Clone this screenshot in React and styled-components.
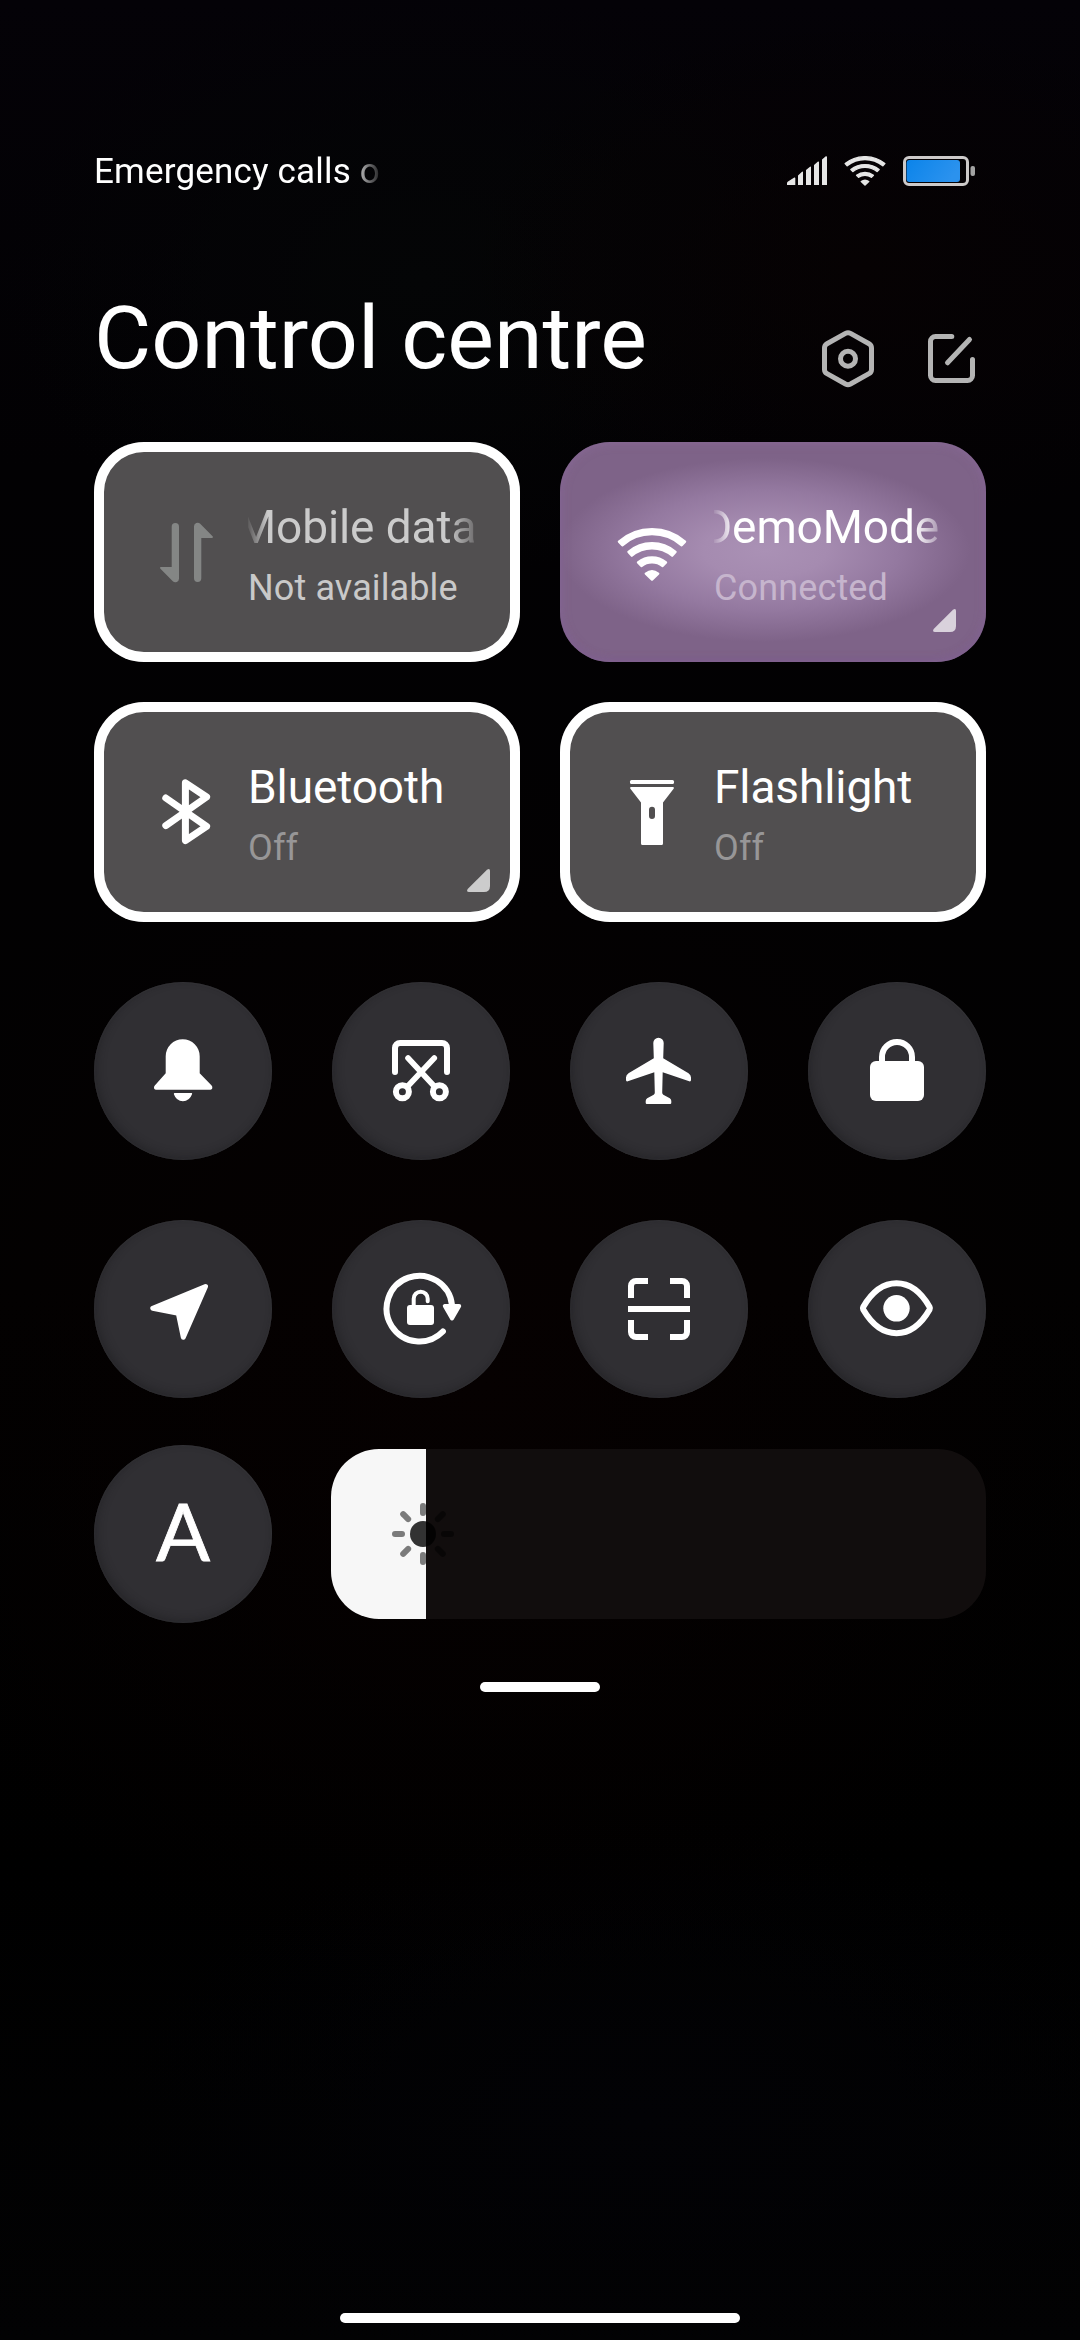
import React from "react";
import styled, { createGlobalStyle } from "styled-components";

const GlobalStyle = createGlobalStyle`
  * { box-sizing: border-box; }
  html, body { margin: 0; padding: 0; background: #020103; }
  body { font-family: Roboto, "Noto Sans", sans-serif; color: #fff; }
  svg { display: block; flex: none; }
`;

const Screen = styled.main`
  width: 1080px;
  height: 2340px;
  overflow: hidden;
  display: flex;
  flex-direction: column;
  padding: 151px 94px 17px;
  background:
    radial-gradient(420px 260px at 860px 270px, #060203, transparent),
    radial-gradient(420px 300px at 420px 280px, #040506, transparent),
    radial-gradient(620px 620px at 480px 1380px, #060101, transparent),
    radial-gradient(520px 300px at 640px 2120px, #020205, transparent),
    linear-gradient(#040207, #020103 20%, #020101 55%, #000 80%, #020203);
`;

const StatusBar = styled.div`
  display: flex;
  justify-content: space-between;
  align-items: flex-start;
  height: 42px;
  padding-right: 11px;
`;

const Carrier = styled.span`
  width: 292px;
  font-size: 35px;
  line-height: 42px;
  letter-spacing: 0.18px;
  white-space: nowrap;
  mask-image: linear-gradient(to right, #000 256px, transparent 290px);
`;

const StatusIcons = styled.div`
  display: flex;
  gap: 17px;
  padding-top: 5px;
`;

const Header = styled.header`
  display: flex;
  justify-content: space-between;
  align-items: flex-start;
  height: 156px;
  margin-top: 93px;
  padding-right: 8px;
`;

const Title = styled.h1`
  margin: 0;
  font-size: 88px;
  font-weight: 400;
  line-height: 104px;
  white-space: nowrap;
`;

const HeaderActions = styled.div`
  display: flex;
  gap: 43px;
  padding-top: 42px;
`;

const PlainButton = styled.button`
  padding: 0;
  border: 0;
  background: none;
  color: #b4b4b4;
`;

const TileGrid = styled.section`
  display: grid;
  grid-template-columns: 426px 426px;
  gap: 40px;
`;

const Tile = styled.div`
  position: relative;
  display: flex;
  align-items: flex-start;
  gap: 17px;
  height: 220px;
  padding-left: 47px;
  border-radius: 50px;
  background: ${(p) =>
    p.$active
      ? "radial-gradient(205px 92px at 205px 108px, #aa91b5 0%, #a58bb0 30%, #9479a0 65%, #7e6388 100%)"
      : "#514f50"};
  box-shadow: ${(p) =>
    p.$active
      ? "inset 0 0 10px 1px rgba(150, 115, 165, 0.55), inset 0 -3px 6px rgba(105, 75, 125, 0.5)"
      : "inset 0 0 0 10px #fff"};
`;

const TileIcon = styled.span`
  padding-top: 65px;
  color: ${(p) => (p.$dim ? "#848685" : "#fff")};
`;

const TileText = styled.div`
  display: flex;
  flex-direction: column;
  gap: 11px;
  width: 227px;
  padding-top: 57px;
`;

const TileName = styled.div`
  overflow: hidden;
  font-size: 46px;
  line-height: 56px;
  letter-spacing: -0.1px;
  white-space: nowrap;
  color: ${(p) => (p.$dim ? "#cbcbcb" : "#fff")};
  text-indent: ${(p) => (p.$scrolled ? "-12px" : "0")};
  mask-image: ${(p) =>
    p.$scrolled
      ? "linear-gradient(to right, transparent -2px, #000 20px, #000 200px, rgba(0,0,0,.25) 227px)"
      : "none"};
`;

const TileState = styled.div`
  font-size: 36px;
  line-height: 44px;
  white-space: nowrap;
  letter-spacing: 0.12px;
  color: ${(p) => p.$color};
`;

const ExpandMark = styled.svg`
  position: absolute;
  left: 373px;
  top: 167px;
  fill: rgba(255, 255, 255, 0.71);
`;

const ToggleGrid = styled.section`
  display: grid;
  grid-template-columns: repeat(4, 178px);
  gap: 60px;
  margin-top: 60px;
`;

const Round = styled.button`
  display: flex;
  align-items: center;
  justify-content: center;
  width: 178px;
  height: 178px;
  padding: 0;
  border: 0;
  border-radius: 50%;
  color: #fff;
  background: #302f33;
  box-shadow: inset 3px -3px 8px rgba(24, 24, 27, 0.4), inset 0 0 2px rgba(70, 70, 74, 0.8);
`;

const BrightnessRow = styled.section`
  display: flex;
  align-items: center;
  gap: 59px;
  margin-top: 47px;
`;

const AutoLetter = styled.span`
  padding-bottom: 9px;
  font-family: Lato, sans-serif;
  font-size: 80px;
  line-height: 80px;
  -webkit-text-stroke: 0.8px #fff;
`;

const Slider = styled.div`
  position: relative;
  flex: 1;
  height: 170px;
  border-radius: 48px;
  overflow: hidden;
  background: #110d0d;
`;

const SliderFill = styled.div`
  width: 95px;
  height: 100%;
  background: #f7f7f7;
`;

const SunIcon = styled.svg`
  position: absolute;
  left: 57px;
  top: 50px;
`;

const Handle = styled.div`
  align-self: center;
  width: 120px;
  height: 10px;
  margin-top: 59px;
  border-radius: 5px;
  background: #fff;
`;

const HomeBar = styled.div`
  align-self: center;
  width: 400px;
  height: 10px;
  margin-top: auto;
  border-radius: 5px;
  background: #fff;
`;

/* A ring slice opening upwards, with softly rounded corners. */
function slice(cx, cy, inner, outer) {
  const s = 0.676;
  const c = 0.737;
  const a = inner + 1.2;
  const b = outer - 1.2;
  const e = 1.2;
  return (
    `M${cx - b * s + e * c} ${cy - b * c - e * s}` +
    `A${b} ${b} 0 0 1 ${cx + b * s - e * c} ${cy - b * c - e * s}` +
    `L${cx + a * s - e * c} ${cy - a * c - e * s}` +
    `A${a} ${a} 0 0 0 ${cx - a * s + e * c} ${cy - a * c - e * s}Z`
  );
}

const WifiShape = () => (
  <g fill="currentColor" stroke="currentColor" strokeWidth="2.4" strokeLinejoin="round">
    <path d={slice(92, 137.4, 44, 51.4)} />
    <path d={slice(92, 137.4, 29.9, 37.3)} />
    <path d={slice(92, 137.4, 15.8, 23.2)} />
    <path d="M92 137.6L85.8 131.6Q92 126.8 98.2 131.6Z" />
  </g>
);

const Glyph = ({ view = "44 44 90 90", children }) => (
  <svg width="90" height="90" viewBox={view} fill="none" stroke="none">
    {children}
  </svg>
);

const TILE_VIEW = "47 65 90 90";

const MobileDataIcon = () => {
  const arrow = "M77.7 84.7a3.65 3.65 0 0 1 7.3 0V136.8a3.6 3.6 0 0 1-6.2 2.4L66.2 126.4q-.8-1.4.9-1.4H77.7Z";
  return (
    <Glyph view={TILE_VIEW}>
      <path d={arrow} fill="currentColor" />
      <path d={arrow} fill="currentColor" transform="rotate(180 92.5 110.5)" />
    </Glyph>
  );
};

const WifiIcon = () => (
  <Glyph view={TILE_VIEW}>
    <WifiShape />
  </Glyph>
);

const BluetoothIcon = () => (
  <Glyph view={TILE_VIEW}>
    <path
      d="M71.8 96L112.6 124.4L91.4 138.6V80.8L112.6 95L71.8 123.6"
      stroke="currentColor"
      strokeWidth="7"
      strokeLinecap="round"
      strokeLinejoin="round"
    />
  </Glyph>
);

const FlashlightIcon = () => (
  <Glyph view={TILE_VIEW}>
    <rect x="70" y="78" width="44" height="4" rx="1.5" fill="currentColor" />
    <path
      fillRule="evenodd"
      fill="currentColor"
      d="M71 85H113Q114.400 85 113.800 86.600L103 100.500V141.500Q103 143 101.500 143H82.500Q81 143 81 141.500V100.500L70.200 86.600Q69.600 85 71 85ZM92 104.700a3 3 0 0 0-3 3v6.300a3 3 0 0 0 6 0v-6.300a3 3 0 0 0-3-3Z"
    />
  </Glyph>
);

const BellIcon = () => (
  <Glyph>
    <path
      fill="currentColor"
      d="M88.700 57.300a17 17 0 0 1 17 17V91.300L117.600 103.400Q118.600 104.600 118.300 106.300Q117.900 107.700 116.500 107.700H61.800Q60.300 107.700 60 106.300Q59.700 104.600 60.800 103.400L71.700 91.300V74.300a17 17 0 0 1 17-17ZM80.700 111H97.500Q98.500 111 98 112.300Q95.500 119.200 88.900 119.200T79.900 112.300Q79.600 111 80.700 111Z"
    />
  </Glyph>
);

const ScreenshotIcon = () => (
  <Glyph>
    <g stroke="currentColor" strokeWidth="6" strokeLinecap="round">
      <path d="M63 90V66a5 5 0 0 1 5-5h42a5 5 0 0 1 5 5v24" />
      <path d="M76 76L102.500 104.500M102.300 76L75.500 104.500" strokeWidth="5.600" />
      <circle cx="70.400" cy="109.700" r="6.500" />
      <circle cx="107.400" cy="109.700" r="6.500" />
    </g>
  </Glyph>
);

const AirplaneIcon = () => (
  <Glyph>
    <path
      fill="currentColor"
      d="M88.500 55.700a5.200 5.200 0 0 1 5.200 5.200L93.200 76.300L118.500 91.300Q121 93 121 95.500V98Q121 99.800 119.200 99.300L92.700 90.200L92.200 110.500Q92.200 112 93.300 112.800L99.800 116.300Q101.300 117.400 101.300 119V120.800Q101.300 122 100.200 122H76.800Q75.700 122 75.700 120.800V119Q75.700 117.400 77.200 116.300L83.700 112.800Q84.900 112 84.800 110.500L84.300 90.200L57.800 99.300Q56 99.800 56 98V95.500Q56 93 58.500 91.300L83.800 76.300L83.300 60.900a5.200 5.200 0 0 1 5.200-5.200Z"
    />
  </Glyph>
);

const LockIcon = () => (
  <Glyph>
    <rect x="62" y="79" width="54" height="40" rx="6" fill="currentColor" />
    <path d="M74 81V75a15 15 0 0 1 30 0v6" stroke="currentColor" strokeWidth="6" />
  </Glyph>
);

const LocationIcon = () => (
  <Glyph>
    <path
      d="M111.500 66.600L58.800 88.300L84.300 93.300L89.300 117.200Z"
      fill="currentColor"
      stroke="currentColor"
      strokeWidth="5"
      strokeLinejoin="round"
    />
  </Glyph>
);

const RotationIcon = () => (
  <Glyph>
    <path
      d="M110.900 111.500A32.800 32.800 0 1 1 120 85"
      stroke="currentColor"
      strokeWidth="6"
      strokeLinecap="round"
    />
    <path
      d="M112.800 86H127.200L120 98.400Z"
      fill="currentColor"
      stroke="currentColor"
      strokeWidth="4"
      strokeLinejoin="round"
    />
    <rect x="75" y="85" width="27" height="20" rx="3" fill="currentColor" />
    <path
      d="M81.700 86V78.700a7 7 0 0 1 14 0v2.600"
      stroke="currentColor"
      strokeWidth="4"
      strokeLinecap="round"
    />
  </Glyph>
);

const ScanIcon = () => (
  <Glyph>
    <path
      d="M78 61H66a5 5 0 0 0-5 5V78M100 61H112a5 5 0 0 1 5 5V78M78 117H66a5 5 0 0 1-5-5V100M100 117H112a5 5 0 0 0 5-5V100M58 89H120"
      stroke="currentColor"
      strokeWidth="6"
    />
  </Glyph>
);

const EyeIcon = () => (
  <Glyph>
    <path
      d="M55.200 87Q69 63.300 88.500 63.300T121.600 87Q122.300 88.300 121.600 89.600Q108 113.300 88.500 113.300T55.200 89.600Q54.500 88.300 55.200 87Z"
      stroke="currentColor"
      strokeWidth="6"
      strokeLinejoin="round"
    />
    <circle cx="88.500" cy="88.300" r="13.200" fill="currentColor" />
  </Glyph>
);

const SignalIcon = () => (
  <svg width="40" height="30" viewBox="0 0 40 30" fill="#e6e6e6">
    <path d="M0 29V27Q0 26 1 25.500L7.300 21.500Q8.300 21.200 8.300 22.200V29ZM11 29V19.500L15 15.700Q16 15.200 16 16.400V29ZM19 29V14L23 10.700Q24 10.200 24 11.400V29ZM27 29V9L31 5.600Q32 5.200 32 6.400V29ZM35 29V3.500L38.800 .3Q40 -.2 40 1.200V29Z" />
  </svg>
);

const StatusWifi = styled.svg`
  color: #e6e6e6;
`;

const BatteryIcon = () => (
  <svg width="72" height="30" viewBox="0 0 72 30">
    <defs>
      <linearGradient id="charge" x1="0" x2="1" y1="0" y2="0.3">
        <stop offset="0" stopColor="#0b84ea" />
        <stop offset="1" stopColor="#2b92ee" />
      </linearGradient>
    </defs>
    <rect x="1.500" y="1.500" width="63" height="27" rx="4.500" fill="none" stroke="#cdcaca" strokeWidth="3" />
    <rect x="3.500" y="4" width="53.500" height="22" rx="3" fill="url(#charge)" />
    <rect x="67.500" y="10" width="4.500" height="10" rx="2" fill="#a3a3a3" />
  </svg>
);

const SettingsIcon = () => (
  <svg width="60" height="60" viewBox="818 328 60 60" fill="none" stroke="currentColor" strokeWidth="5">
    <path d="M850.500 333.400L869 343.800Q871.500 345.200 871.500 348V369.400Q871.500 372.200 869 373.600L850.500 384Q848 385.300 845.500 384L827 373.600Q824.500 372.200 824.500 369.400V348Q824.500 345.200 827 343.800L845.500 333.400Q848 332.100 850.500 333.400Z" />
    <circle cx="848" cy="358.700" r="7.500" />
  </svg>
);

const EditIcon = () => (
  <svg width="57" height="60" viewBox="921 328 57 60" fill="none" stroke="currentColor" strokeWidth="5" strokeLinecap="round">
    <path d="M951.800 336.500H935.500a5 5 0 0 0-5 5V375.500a5 5 0 0 0 5 5H967.500a5 5 0 0 0 5-5V359.500M969.500 339.500L947.500 362.800" />
  </svg>
);

const SunGlyph = () => (
  <SunIcon width="70" height="70" viewBox="-35 -35 70 70">
    <circle r="13" fill="rgba(0,0,0,.8)" />
    {[0, 45, 90, 135, 180, 225, 270, 315].map((a) => (
      <rect key={a} x="-3" y="-31" width="6" height="13" rx="3" fill="rgba(0,0,0,.5)" transform={`rotate(${a})`} />
    ))}
  </SunIcon>
);

const tiles = [
  { name: "Mobile data", state: "Not available", icon: MobileDataIcon, dim: true, scrolled: true, color: "#c9c9c9" },
  { name: "DemoMode", state: "Connected", icon: WifiIcon, active: true, scrolled: true, expand: true, color: "#c6b5cd" },
  { name: "Bluetooth", state: "Off", icon: BluetoothIcon, expand: true, color: "#979697" },
  { name: "Flashlight", state: "Off", icon: FlashlightIcon, color: "#979697" },
];

const toggles = [
  ["Mute", BellIcon],
  ["Screenshot", ScreenshotIcon],
  ["Aeroplane mode", AirplaneIcon],
  ["Lock screen", LockIcon],
  ["Location", LocationIcon],
  ["Rotation", RotationIcon],
  ["Scanner", ScanIcon],
  ["Reading mode", EyeIcon],
];

export default function App() {
  return (
    <>
      <GlobalStyle />
      <Screen>
        <StatusBar>
          <Carrier>Emergency calls o</Carrier>
          <StatusIcons>
            <SignalIcon />
            <StatusWifi width="42" height="30" viewBox="57 86 70 53.500" preserveAspectRatio="none">
              <WifiShape />
            </StatusWifi>
            <BatteryIcon />
          </StatusIcons>
        </StatusBar>
        <Header>
          <Title>Control centre</Title>
          <HeaderActions>
            <PlainButton><SettingsIcon /></PlainButton>
            <PlainButton><EditIcon /></PlainButton>
          </HeaderActions>
        </Header>
        <TileGrid>
          {tiles.map(({ icon: Icon, ...t }) => (
            <Tile key={t.name} $active={t.active}>
              <TileIcon $dim={t.dim}><Icon /></TileIcon>
              <TileText>
                <TileName $dim={t.dim} $scrolled={t.scrolled}>{t.name}</TileName>
                <TileState $color={t.color}>{t.state}</TileState>
              </TileText>
              {t.expand && (
                <ExpandMark width="23" height="23" viewBox="0 0 23 23">
                  <path d="M20 .7Q23 -1 23 2V17Q23 23 17 23H2Q-1 23 .7 20Z" />
                </ExpandMark>
              )}
            </Tile>
          ))}
        </TileGrid>
        <ToggleGrid>
          {toggles.map(([label, Icon]) => (
            <Round key={label}><Icon /></Round>
          ))}
        </ToggleGrid>
        <BrightnessRow>
          <Round><AutoLetter>A</AutoLetter></Round>
          <Slider>
            <SliderFill />
            <SunGlyph />
          </Slider>
        </BrightnessRow>
        <Handle />
        <HomeBar />
      </Screen>
    </>
  );
}
